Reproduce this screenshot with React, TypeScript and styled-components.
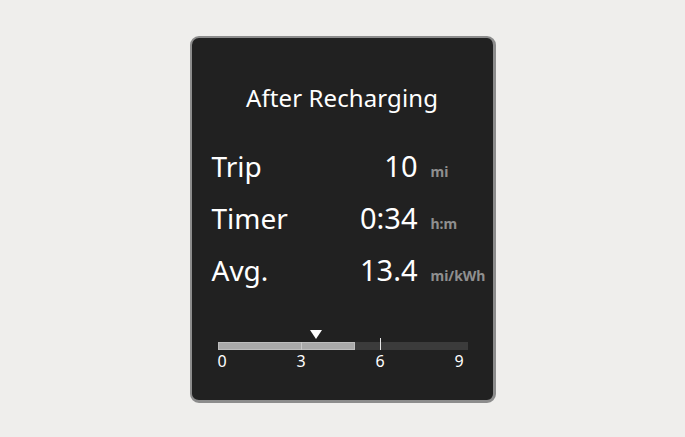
import styled, { createGlobalStyle } from 'styled-components'

const GlobalStyle = createGlobalStyle`
	html, body {
		margin: 0;
		padding: 0;
		background: #efeeec;
	}
	#root {
		width: 685px;
		height: 437px;
	}
`

const filas = [
	{ label: 'Trip', value: '10', unit: 'mi' },
	{ label: 'Timer', value: '0:34', unit: 'h:m' },
	{ label: 'Avg.', value: '13.4', unit: 'mi/kWh' },
]

// escala: 0..9 en la barra, 79px por cada 3 unidades
const PASO = 79 / 3
const pos = (v: number) => 4 + v * PASO

export default function App() {
	const relleno = 5.08
	const marcador = 3.57

	return (
		<>
			<GlobalStyle />
			<Pantalla>
				<Panel>
					<Titulo>After Recharging</Titulo>

					<Filas>
						{filas.map(fila => (
							<Fila key={fila.label}>
								<Etiqueta>{fila.label}</Etiqueta>
								<Valor>{fila.value}</Valor>
								<Unidad>{fila.unit}</Unidad>
							</Fila>
						))}
					</Filas>

					<Escala>
						<Marcador style={{ left: `${pos(marcador) - 6}px` }}>
							<svg width='12' height='9' viewBox='0 0 12 9'>
								<path d='M0 0 H12 L6 9 Z' fill='#ffffff' />
							</svg>
						</Marcador>
						<Barra>
							<Relleno style={{ width: `${pos(relleno)}px` }} />
							<Marca $claro={false} style={{ left: `${pos(3)}px` }} />
							<Marca $claro style={{ left: `${pos(6)}px` }} />
						</Barra>
						<Numeros>
							{[0, 3, 6, 9].map(n => (
								<Numero key={n}>{n}</Numero>
							))}
						</Numeros>
					</Escala>
				</Panel>
			</Pantalla>
		</>
	)
}

const Pantalla = styled.div`
	width: 685px;
	height: 437px;
	display: flex;
	align-items: center;
	justify-content: center;
	font-family: 'Noto Sans', 'Open Sans', sans-serif;
`

const Panel = styled.div`
	box-sizing: border-box;
	width: 306px;
	height: 367px;
	margin-top: 1px;
	background: #212121;
	border: 2px solid #8c8c8c;
	border-right-width: 3px;
	border-bottom-width: 3px;
	border-radius: 9px;
	display: flex;
	flex-direction: column;
	padding: 0 0 0 20px;
	color: #ffffff;
`

const Titulo = styled.div`
	margin-top: 46px;
	margin-right: 20px;
	text-align: center;
	font-size: 24px;
	line-height: 28px;
	letter-spacing: 0.1px;
`

const Filas = styled.div`
	display: flex;
	flex-direction: column;
	margin-top: 36px;
	gap: 17px;
`

const Fila = styled.div`
	display: flex;
	align-items: baseline;
	height: 35px;
`

const Etiqueta = styled.div`
	flex: 1;
	font-size: 28px;
	line-height: 35px;
`

const Valor = styled.div`
	font-size: 29px;
	line-height: 35px;
	text-align: right;
`

const Unidad = styled.div`
	width: 62px;
	margin-left: 13px;
	font-size: 14px;
	font-weight: 700;
	color: #8f8f8f;
`

const Escala = styled.div`
	position: relative;
	margin-top: 55px;
	margin-left: 6px;
	width: 250px;
`

const Marcador = styled.div`
	position: absolute;
	top: -12px;
	line-height: 0;
`

const Barra = styled.div`
	position: relative;
	height: 8px;
	background: #3b3b3b;
`

const Relleno = styled.div`
	height: 100%;
	background: #a9a9a9;
	box-shadow: inset 0 0 0 1px #bdbdbd;
`

const Marca = styled.div<{ $claro: boolean }>`
	position: absolute;
	width: 1px;
	top: ${({ $claro }) => ($claro ? '-4px' : '0')};
	bottom: 0;
	background: ${({ $claro }) => ($claro ? '#e6e6e6' : '#c8c8c8')};
`

const Numeros = styled.div`
	display: flex;
	justify-content: space-between;
	width: 245px;
	margin-top: 1px;
`

const Numero = styled.div`
	width: 8px;
	text-align: center;
	font-size: 16px;
	line-height: 20px;
`
